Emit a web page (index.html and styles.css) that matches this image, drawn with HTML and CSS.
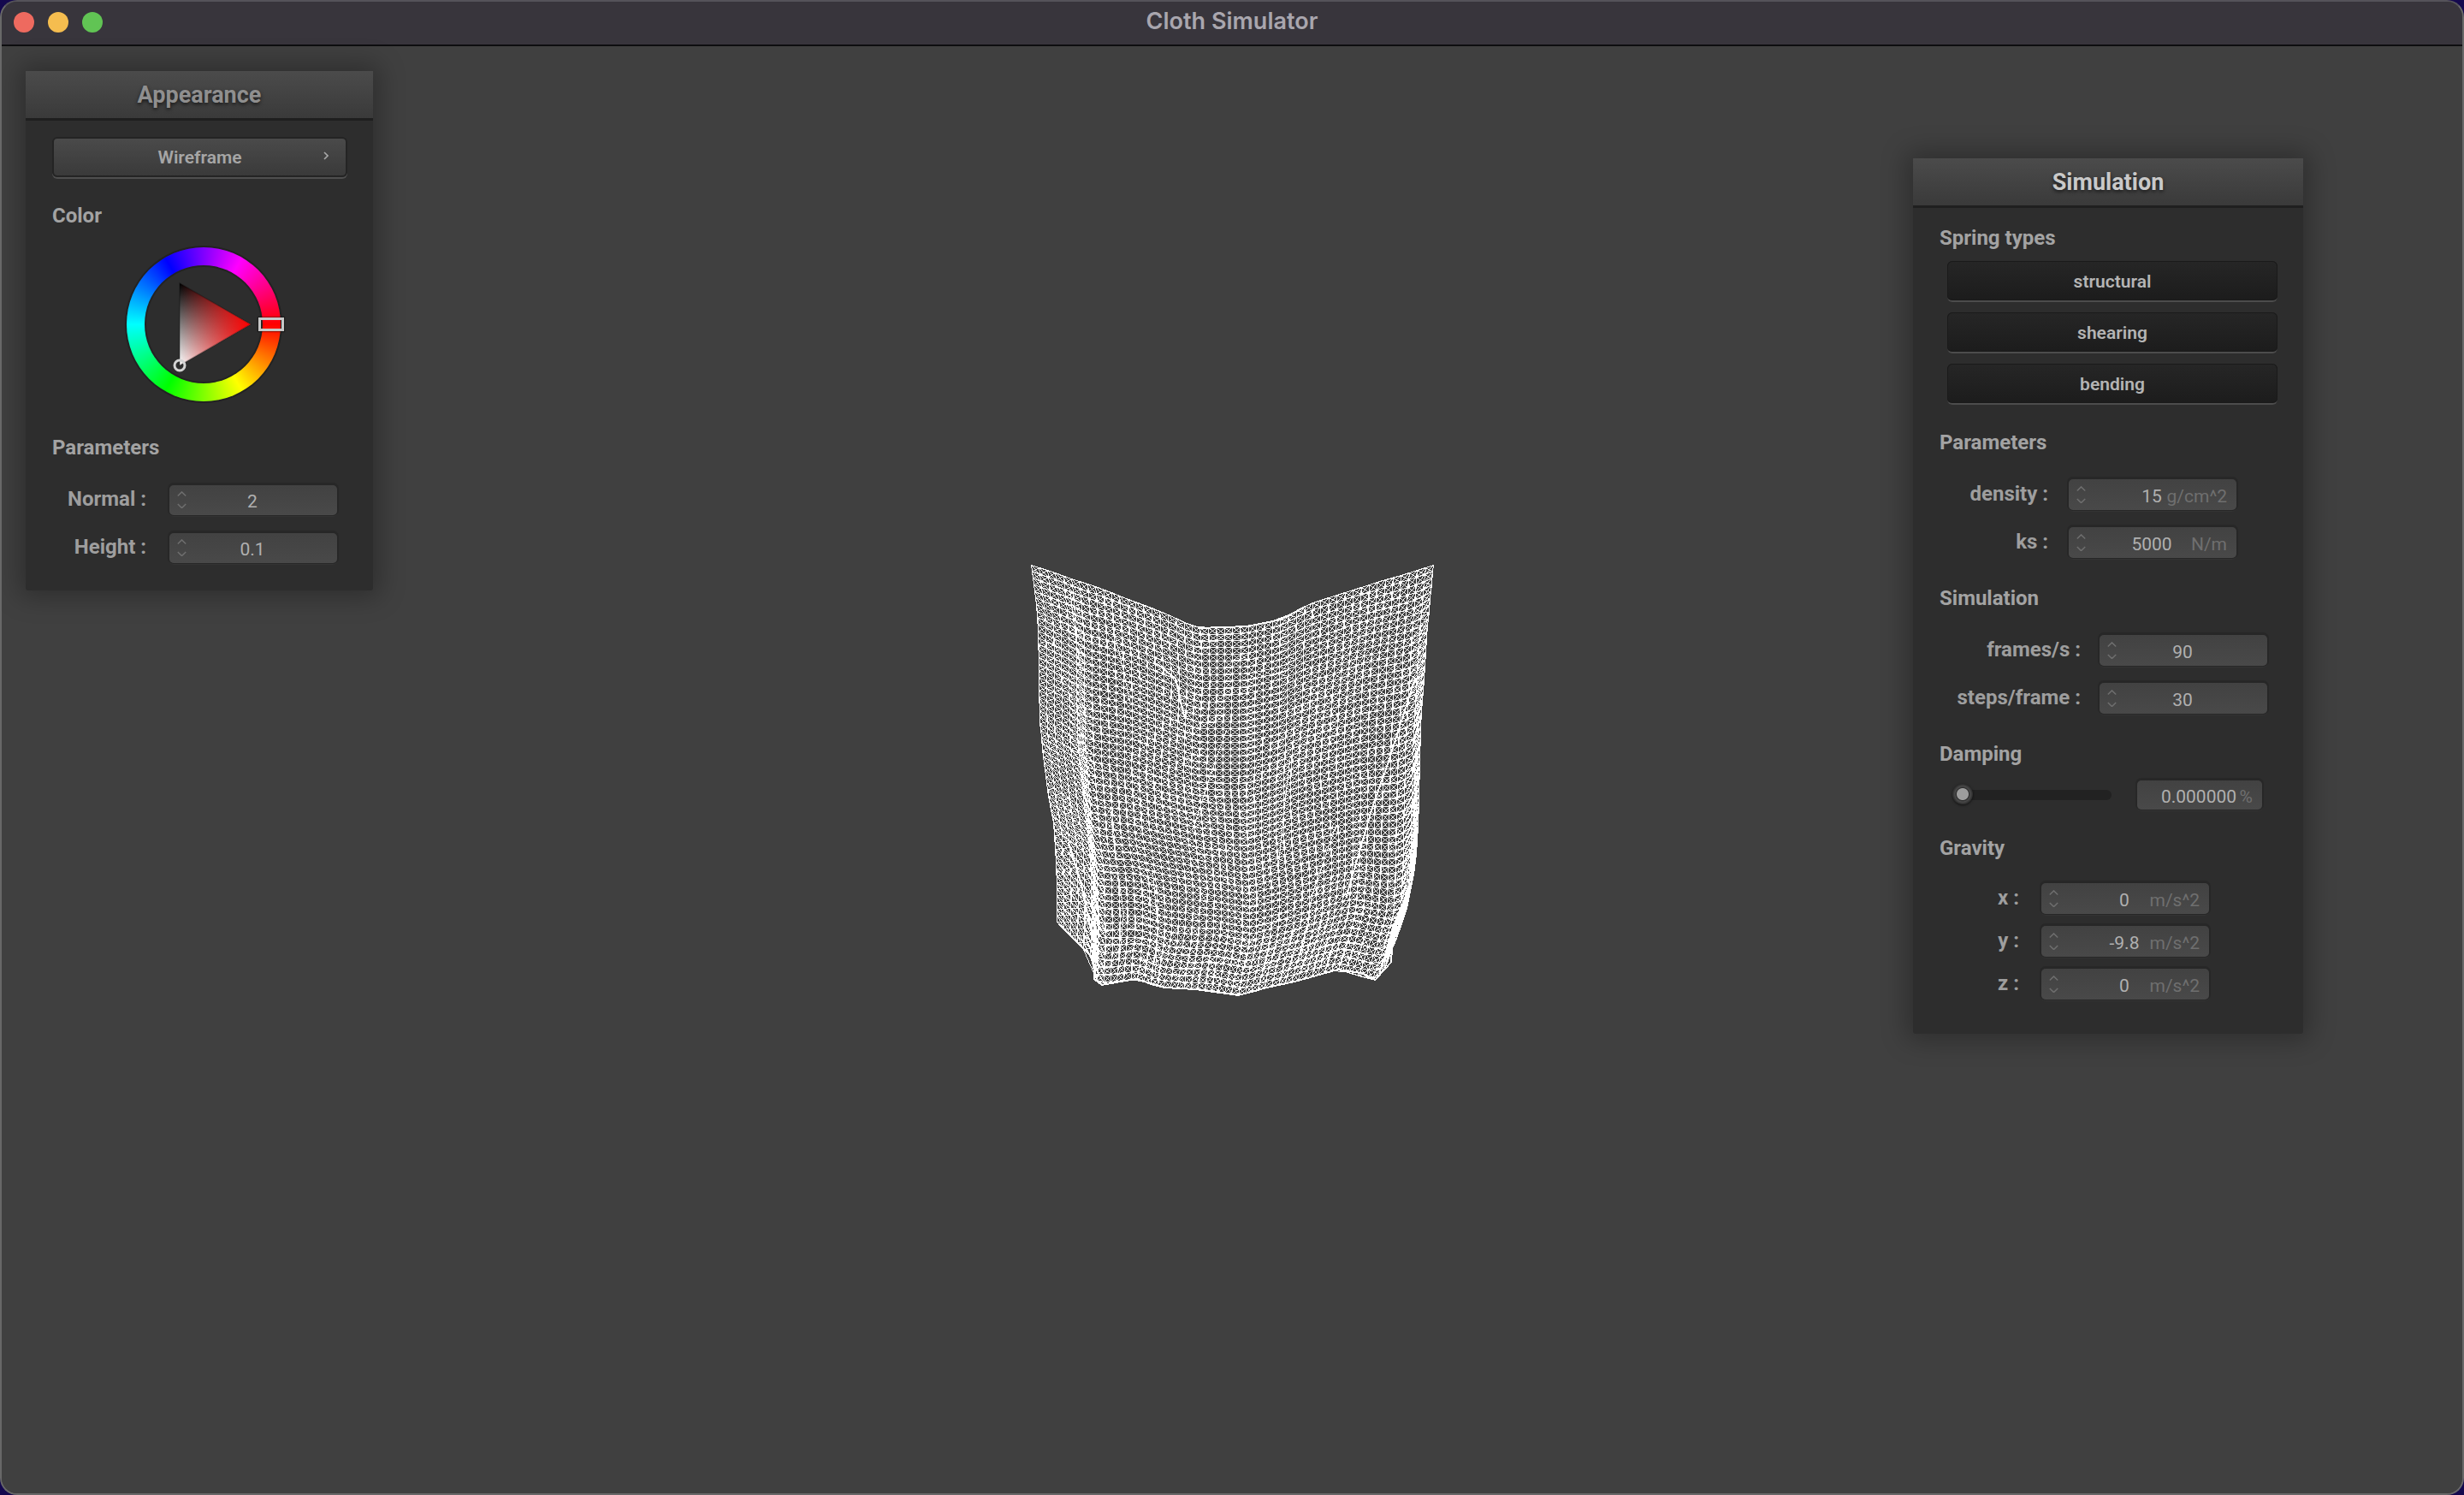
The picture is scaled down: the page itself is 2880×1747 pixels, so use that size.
FILE: index.html
```html
<!DOCTYPE html>
<html lang="en">
<head>
<meta charset="utf-8">
<title>Cloth Simulator</title>
<link rel="stylesheet" href="styles.css">
</head>
<body>
<svg class="defs" width="0" height="0" aria-hidden="true">
  <symbol id="spin" viewBox="0 0 11 20"><path d="M.8 5.5 5.5 .9l4.7 4.6M.8 15 5.5 19.6l4.7-4.6"/></symbol>
</svg>
<div class="window">
  <header class="titlebar">
    <div class="lights"><i class="light red"></i><i class="light yellow"></i><i class="light green"></i></div>
    <h1 class="app-title">Cloth Simulator</h1>
  </header>
  <main class="stage">
    <canvas id="cloth" class="cloth" width="520" height="540"></canvas>

    <section class="panel panel-appearance">
      <h2 class="panel-title dim">Appearance</h2>
      <div class="panel-body">
        <button class="popup">
          <span></span><span class="popup-text">Wireframe</span>
          <svg class="popup-chevron" viewBox="0 0 6 10"><path d="M1 1l4 4-4 4"/></svg>
        </button>
        <h3 class="group group-color">Color</h3>
        <div class="wheel">
          <div class="hub"></div>
          <svg class="wheel-marks" viewBox="0 0 184 184" width="184" height="184">
            <defs>
              <linearGradient id="triV" gradientUnits="userSpaceOnUse" x1="0" y1="42" x2="0" y2="138">
                <stop offset="0" stop-color="#000"/><stop offset="1" stop-color="#fff"/>
              </linearGradient>
              <linearGradient id="triH" gradientUnits="userSpaceOnUse" x1="62" y1="0" x2="145" y2="0">
                <stop offset="0" stop-color="#f00" stop-opacity="0"/><stop offset="1" stop-color="#f00"/>
              </linearGradient>
            </defs>
            <polygon points="62,42 145,90 62,138" fill="url(#triV)"/>
            <polygon points="62,42 145,90 62,138" fill="url(#triH)" stroke="#000" stroke-opacity=".25" stroke-width="1.5"/>
            <circle cx="62" cy="138" r="6" fill="none" stroke="#d4d4d4" stroke-width="3"/>
            <rect x="153.5" y="81.5" width="31" height="17" fill="none" stroke="#000" stroke-opacity=".35" stroke-width="1.5"/>
            <rect x="155.5" y="83.5" width="27" height="13" fill="none" stroke="#c8c8c8" stroke-width="3"/>
          </svg>
        </div>
        <h3 class="group group-params-a">Parameters</h3>
        <div class="rows rows-left">
          <div class="row cols-left"><label class="row-label">Normal :</label><div class="field short"><svg class="spin"><use href="#spin"/></svg><span class="val">2</span></div></div>
          <div class="row cols-left"><label class="row-label">Height :</label><div class="field short"><svg class="spin"><use href="#spin"/></svg><span class="val">0.1</span></div></div>
        </div>
      </div>
    </section>

    <section class="panel panel-simulation">
      <h2 class="panel-title">Simulation</h2>
      <div class="panel-body">
        <h3 class="group group-spring">Spring types</h3>
        <div class="toggles">
          <button class="toggle">structural</button>
          <button class="toggle">shearing</button>
          <button class="toggle">bending</button>
        </div>
        <h3 class="group group-params-b">Parameters</h3>
        <div class="rows">
          <div class="row cols-params"><label class="row-label">density :</label><div class="field"><svg class="spin"><use href="#spin"/></svg><span class="val">15</span><span class="unit">g/cm^2</span></div></div>
          <div class="row cols-params"><label class="row-label">ks :</label><div class="field"><svg class="spin"><use href="#spin"/></svg><span class="val">5000</span><span class="unit">N/m</span></div></div>
        </div>
        <h3 class="group group-sim">Simulation</h3>
        <div class="rows">
          <div class="row cols-sim"><label class="row-label">frames/s :</label><div class="field"><svg class="spin"><use href="#spin"/></svg><span class="val">90</span></div></div>
          <div class="row cols-sim"><label class="row-label">steps/frame :</label><div class="field"><svg class="spin"><use href="#spin"/></svg><span class="val">30</span></div></div>
        </div>
        <h3 class="group group-damp">Damping</h3>
        <div class="slider-row">
          <div class="track"><div class="knob"></div></div>
          <div class="field field-plain"><span></span><span class="val">0.000000</span><span class="unit">%</span></div>
        </div>
        <h3 class="group group-grav">Gravity</h3>
        <div class="rows rows-tight">
          <div class="row cols-grav"><label class="row-label">x :</label><div class="field"><svg class="spin"><use href="#spin"/></svg><span class="val">0</span><span class="unit">m/s^2</span></div></div>
          <div class="row cols-grav"><label class="row-label">y :</label><div class="field"><svg class="spin"><use href="#spin"/></svg><span class="val">-9.8</span><span class="unit">m/s^2</span></div></div>
          <div class="row cols-grav"><label class="row-label">z :</label><div class="field"><svg class="spin"><use href="#spin"/></svg><span class="val">0</span><span class="unit">m/s^2</span></div></div>
        </div>
      </div>
    </section>
  </main>
</div>
<script src="cloth.js"></script>
</body>
</html>
```
FILE: styles.css
```css
* { box-sizing: border-box; }
html, body { margin: 0; height: 100%; }
body { background: #14084e; overflow: hidden; font-family: Roboto, "Liberation Sans", sans-serif; }
.defs { position: absolute; }

.window {
  height: 100vh;
  display: flex;
  flex-direction: column;
  border: 2px solid #686868;
  border-top-color: #55535a;
  border-radius: 20px;
  overflow: hidden;
  background: #404040;
}

.titlebar {
  height: 52px;
  flex: none;
  display: grid;
  grid-template-columns: 1fr auto 1fr;
  align-items: center;
  background: #38353c;
  border-bottom: 2px solid #0e0e10;
}
.lights { display: flex; gap: 16px; padding-left: 14px; padding-bottom: 3px; }
.light { width: 24px; height: 24px; border-radius: 50%; display: block; }
.red { background: #ee6a5f; }
.yellow { background: #f5bd4f; }
.green { background: #61c454; }
.app-title {
  margin: 0;
  font: 600 27px/1 Inter, "Liberation Sans", sans-serif;
  color: #a9a6ae;
  padding-bottom: 6px;
}

.stage { position: relative; flex: 1; background: #404040; }
.cloth { position: absolute; left: 1178px; top: 586px; }

.panel {
  position: absolute;
  background: #2d2d2d;
  box-shadow: 0 0 30px 8px rgba(0, 0, 0, .28);
  border-radius: 3px;
}
.panel-appearance { left: 28px; top: 29px; width: 406px; height: 607px; }
.panel-simulation { left: 2234px; top: 131px; width: 456px; height: 1023px; }

.panel-title {
  margin: 0;
  height: 58px;
  display: flex;
  align-items: center;
  justify-content: center;
  font-size: 27px;
  font-weight: 700;
  color: #c9c9c9;
  text-shadow: 0 2px 4px rgba(0, 0, 0, .65);
  background: linear-gradient(#4b4b4b, #3a3a3a);
  border-bottom: 3px solid #1f1f1f;
  padding-top: 1px;
}
.panel-title.dim { color: #8f8f8f; }
.panel-body { padding-left: 31px; }

.group {
  margin: 0;
  font-size: 24px;
  line-height: 30px;
  font-weight: 700;
  color: #a3a3a3;
}
.group-color { margin-top: 30px; }
.group-params-a { margin-top: 39px; }
.group-spring { margin-top: 20px; }
.group-params-b { margin-top: 29px; }
.group-sim { margin-top: 32px; }
.group-damp { margin-top: 32px; }
.group-grav { margin-top: 30px; }

.popup {
  margin-top: 19px;
  width: 345px;
  height: 47px;
  padding: 0 20px 0 0;
  display: grid;
  grid-template-columns: 1fr auto 1fr;
  align-items: center;
  border: 2px solid #242424;
  border-radius: 6px;
  background: linear-gradient(#4a4a4a, #3a3a3a);
  box-shadow: 0 2px 0 #4f4f4f;
  font: 600 21px Roboto, sans-serif;
  color: #a6a6a6;
}
.popup-text { padding-left: 20px; }
.popup-chevron { width: 6px; height: 10px; justify-self: end; margin-top: -4px; }
.popup-chevron path { fill: none; stroke: #a8a8a8; stroke-width: 1.6; }

.wheel {
  position: relative;
  width: 180px;
  height: 180px;
  margin: 22px 0 0 87px;
  border-radius: 50%;
  background: conic-gradient(from 90deg, #f00, #ff0, #0f0, #0ff, #00f, #f0f, #f00);
  box-shadow: 0 0 0 2px #222;
}
.hub {
  position: absolute;
  inset: 23px;
  border-radius: 50%;
  background: #2d2d2d;
  box-shadow: 0 0 0 2px #232323;
}
.wheel-marks { position: absolute; left: 0; top: 0; overflow: visible; }

.rows { display: flex; flex-direction: column; gap: 20px; margin-top: 28px; }
.rows-left { gap: 21px; margin-top: 29px; }
.rows-tight { gap: 14px; margin-top: 26px; }
.row { display: grid; align-items: center; }
.cols-left { grid-template-columns: 110px 196px; column-gap: 27px; }
.cols-params { grid-template-columns: 127px 196px; column-gap: 24px; }
.cols-sim { grid-template-columns: 165px 196px; column-gap: 22px; }
.cols-grav { grid-template-columns: 93px 196px; column-gap: 26px; }
.row-label {
  text-align: right;
  font-size: 24px;
  font-weight: 700;
  color: #9e9e9e;
  white-space: nowrap;
  padding-bottom: 3px;
}

.field {
  height: 36px;
  display: grid;
  grid-template-columns: 1fr auto 1fr;
  align-items: center;
  padding: 0 11px 0 9px;
  border-radius: 5px;
  background: linear-gradient(#424242, #494949);
  box-shadow: 0 -1px 0 2px #272727, 0 1px 0 1px #333;
  font-size: 21px;
  color: #b0b0b0;
}
.field.short { height: 35px; }
.field-plain { width: 146px; height: 34px; }
.spin { width: 11px; height: 20px; justify-self: start; margin-top: -1px; }
.spin use, #spin path { fill: none; stroke: #6e6e6e; stroke-width: 1.5; }
.val { padding-top: 3px; white-space: nowrap; }
.unit { justify-self: end; padding-top: 3px; color: #6f6f6f; white-space: nowrap; }

.toggles { display: flex; flex-direction: column; gap: 12px; margin: 12px 0 0 9px; }
.toggle {
  width: 386px;
  height: 48px;
  padding: 2px 0 0;
  border: 0;
  border-bottom: 2px solid #4c4c4c;
  border-radius: 6px;
  background: linear-gradient(#262626, #1c1c1c);
  box-shadow: inset 0 0 0 1px #1a1a1a;
  font: 600 21px Roboto, sans-serif;
  color: #b4b4b4;
}

.slider-row { display: flex; align-items: center; gap: 30px; margin: 16px 0 0 16px; }
.track { position: relative; width: 185px; height: 12px; border-radius: 6px; background: #222; }
.knob {
  position: absolute;
  left: -1px;
  top: -7px;
  width: 24px;
  height: 24px;
  border-radius: 50%;
  background: radial-gradient(circle, #9d9d9d 0 6.5px, #2d2d2d 7.5px, #4a4a4a 9px, #2a2a2a 12px);
  box-shadow: 0 1px 3px rgba(0, 0, 0, .6);
}
```
FILE: cloth.js
```js
(function () {
  var canvas = document.getElementById('cloth');
  var ctx = canvas.getContext('2d');
  var W = canvas.width, H = canvas.height;
  var img = ctx.createImageData(W, H);
  var OX = 1180, OY = 640, NX = 50, NY = 54, YS = 1.033;

  function dot(x, y) {
    if (x < 0 || y < 0 || x >= W || y >= H) return;
    var i = (y * W + x) * 4;
    img.data[i] = img.data[i + 1] = img.data[i + 2] = img.data[i + 3] = 255;
  }
  function line(a, b, thick) {
    var x0 = Math.round(a[0]), y0 = Math.round(a[1]);
    var x1 = Math.round(b[0]), y1 = Math.round(b[1]);
    var dx = Math.abs(x1 - x0), dy = -Math.abs(y1 - y0);
    var sx = x0 < x1 ? 1 : -1, sy = y0 < y1 ? 1 : -1, err = dx + dy;
    for (;;) {
      dot(x0, y0);
      if (thick) { dot(x0 + 1, y0); dot(x0, y0 + 1); }
      if (x0 === x1 && y0 === y1) break;
      var e = 2 * err;
      if (e >= dy) { err += dy; x0 += sx; }
      if (e <= dx) { err += dx; y0 += sy; }
    }
  }
  function interp(pts, t) {
    if (t <= pts[0][0]) return pts[0][1];
    for (var i = 1; i < pts.length; i++) {
      if (t <= pts[i][0]) {
        var k = (t - pts[i - 1][0]) / (pts[i][0] - pts[i - 1][0]);
        return pts[i - 1][1] + k * (pts[i][1] - pts[i - 1][1]);
      }
    }
    return pts[pts.length - 1][1];
  }
  function hash(i, j) {
    var s = Math.sin(i * 127.1 + j * 311.7) * 43758.5453;
    return (s - Math.floor(s)) * 2 - 1;
  }

  var TOP = [[1205,659],[1283,685],[1360,713],[1397,730],[1427,730],[1457,729],[1497,720],[1530,703],[1600,682],[1675,659]];
  var BOTTOM = [[1235,1063],[1275,1102],[1278,1128],[1287,1133],[1327,1127],[1357,1137],[1413,1140],[1447,1146],[1480,1137],[1513,1130],[1563,1117],[1607,1129],[1625,1108],[1627,1070]];
  var LEFT = [[659,1205],[723,1213],[840,1215],[907,1223],[957,1232],[1017,1235],[1063,1235]];
  var RIGHT = [[659,1675],[740,1667],[840,1660],[957,1657],[1007,1653],[1070,1627]];

  function pos(u, v, i, j) {
    var tx = 1205 + u * 470, ty = interp(TOP, tx);
    var bx = 1235 + u * 392, by = interp(BOTTOM, bx);
    var ly = 659 + v * 404, lx = interp(LEFT, ly);
    var ry = 659 + v * 411, rx = interp(RIGHT, ry);
    var x = (1 - v) * tx + v * bx + (1 - u) * lx + u * rx
      - ((1 - u) * (1 - v) * 1205 + u * (1 - v) * 1675 + (1 - u) * v * 1235 + u * v * 1627);
    var y = (1 - v) * ty + v * by + (1 - u) * ly + u * ry
      - ((1 - u) * (1 - v) * 659 + u * (1 - v) * 659 + (1 - u) * v * 1063 + u * v * 1070);
    var edge = Math.min(1, 8 * u * (1 - u)) * Math.min(1, 6 * v * (1 - v) + 0.1);
    var low = Math.max(0, (v - 0.72) / 0.28);
    x += edge * (1.1 * Math.sin(v * 11 + u * 17) + 1.6 * low * Math.sin(u * 29) + 3.2 * low * low * hash(i, j));
    y += edge * (0.9 * Math.cos(u * 19 - v * 6) + 1.4 * low * Math.sin(u * 21 + 1) + 3 * low * low * hash(j, i + 7));
    return [x - OX, (y - OY) * YS];
  }

  var g = [], i, j;
  for (j = 0; j <= NY; j++) {
    g[j] = [];
    for (i = 0; i <= NX; i++) g[j][i] = pos(i / NX, j / NY, i, j);
  }
  for (j = 0; j <= NY; j++) {
    for (i = 0; i <= NX; i++) {
      if (i < NX) line(g[j][i], g[j][i + 1]);
      if (j < NY) line(g[j][i], g[j + 1][i]);
      if (i < NX - 1) line(g[j][i], g[j][i + 2]);
      if (j < NY - 1) line(g[j][i], g[j + 2][i]);
      if (i < NX && j < NY) {
        line(g[j][i], g[j + 1][i + 1]);
        line(g[j][i + 1], g[j + 1][i]);
      }
    }
  }

  /* Folds and crowded edges, traced over the reference crop (x/3, y/2.904). */
  var FOLDS = [
    [[205,1000],[245,1130],[280,1280],[310,1380]],
    [[1420,440],[1380,560],[1320,740],[1270,880],[1180,1180]],
    [[520,395],[580,440],[610,570]],
    [[170,1275],[290,1390],[295,1460],[320,1480]],
    [[1230,1440],[1280,1465],[1335,1405],[1340,1300]],
    [[320,1480],[440,1460],[540,1490],[650,1495],[800,1517],[900,1490],[1000,1470],[1150,1430],[1230,1440]],
    [[660,270],[750,268],[830,265],[950,240],[1030,200]],
    [[210,140],[230,310],[250,420]],
    [[370,300],[400,420],[420,520]],
    [[350,880],[370,1040],[400,1240],[380,1420]],
    [[1140,950],[1060,1180],[1020,1400]],
    [[760,620],[700,780],[640,960]],
    [[980,720],[960,900],[940,1100]],
    [[500,1100],[520,1290],[510,1450]]
  ];
  FOLDS.forEach(function (f, n) {
    for (var k = 1; k < f.length; k++) {
      line([f[k - 1][0] / 3, f[k - 1][1] / 2.904], [f[k][0] / 3, f[k][1] / 2.904], n < 7);
    }
  });

  ctx.putImageData(img, 0, 0);
})();
```
